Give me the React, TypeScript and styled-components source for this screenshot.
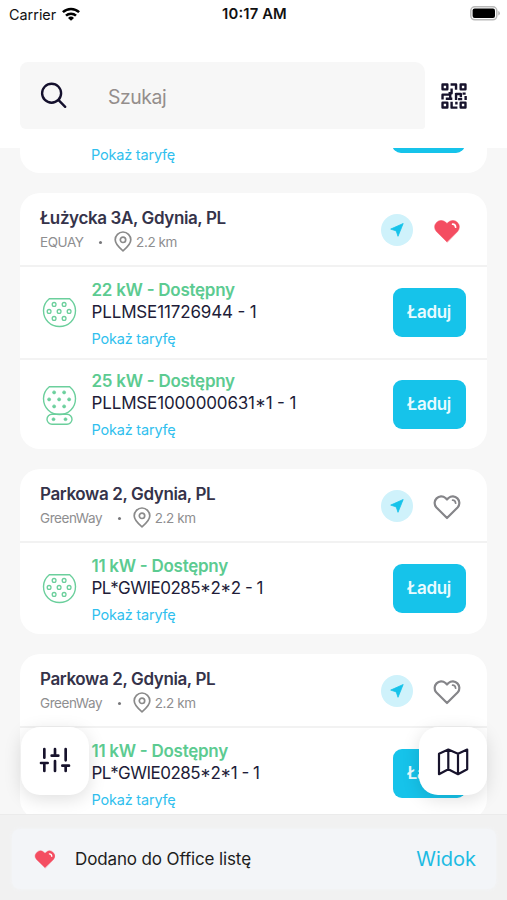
import React from 'react';
import styled, { createGlobalStyle } from 'styled-components';

const GlobalStyle = createGlobalStyle`
  * { box-sizing: border-box; }
  body {
    margin: 0;
    background: #fff;
    font-family: Inter, sans-serif;
    font-feature-settings: 'calt' 1;
  }
`;

const CYAN = '#16c3ea';
const INK = '#211c38';

const Screen = styled.div`
  width: 507px;
  height: 900px;
  display: flex;
  flex-direction: column;
  overflow: hidden;
  background: #fff;
`;

const StatusBar = styled.div`
  height: 28px;
  flex: none;
  display: grid;
  grid-template-columns: 1fr auto 1fr;
  padding: 0 7px 0 9px;
  align-items: center;
  color: #111;
`;
const Carrier = styled.div`
  display: flex;
  align-items: center;
  gap: 6px;
  font-size: 14.4px;
`;
const Clock = styled.div`
  font-size: 14.8px;
  font-weight: 600;
  letter-spacing: 0.15px;
`;
const Battery = styled.svg`
  justify-self: end;
  display: block;
  margin-top: -2px;
`;

const SearchArea = styled.div`
  height: 120px;
  flex: none;
  display: flex;
  align-items: flex-start;
  padding: 34px 0 0 20px;
`;
const SearchBox = styled.div`
  width: 405px;
  height: 67px;
  display: flex;
  align-items: center;
  gap: 39px;
  padding: 2px 0 0 20px;
  border-radius: 8px 10px 3px 6px;
  background: #f7f7f7;
  color: #948e8c;
  font-size: 19.4px;
  letter-spacing: -0.45px;
`;
const ScanButton = styled.div`
  width: 57px;
  height: 67px;
  display: flex;
  align-items: center;
  justify-content: center;
`;

const ListArea = styled.div`
  position: relative;
  height: 666px;
  flex: none;
  overflow: hidden;
  background: #f7f7f7;
`;
const List = styled.div`
  display: flex;
  flex-direction: column;
  gap: 20px;
  width: 467px;
  margin: 0 20px;
`;
const Card = styled.section`
  overflow: hidden;
  border-radius: 20px;
  background: #fff;
`;
const CutCard = styled.section`
  height: 25px;
  display: flex;
  justify-content: space-between;
  padding: 0 22px 0 71px;
  border-radius: 0 0 20px 20px;
  background: #fff;
`;
const CutButton = styled.div`
  width: 73px;
  height: 4.500px;
  overflow: hidden;
  display: flex;
  align-items: flex-end;

  &::after {
    content: '';
    flex: 1;
    height: 49px;
    border-radius: 9px;
    background: ${CYAN};
  }
`;
const CardHeader = styled.header`
  height: 74px;
  display: flex;
  padding: 13px 24px 0 20px;
  border-bottom: 2px solid #f2f2f2;
`;
const Place = styled.div`
  flex: 1;
`;
const Title = styled.div`
  margin-top: 0.6px;
  font-size: 17px;
  line-height: 22px;
  font-weight: 600;
  letter-spacing: -0.38px;
  color: #35334a;
  white-space: nowrap;
`;
const Meta = styled.div`
  display: flex;
  align-items: center;
  height: 20px;
  margin-top: 3px;
  font-size: 13.5px;
  letter-spacing: -0.42px;
  color: #8e8e90;
`;
const Dot = styled.i`
  width: 3px;
  height: 3px;
  margin: 2px 12px 0 15.5px;
  border-radius: 50%;
  background: #77777a;
`;
const Distance = styled.span`
  display: flex;
  align-items: center;
  gap: 4px;
`;
const Actions = styled.div`
  display: flex;
  align-items: center;
  gap: 18px;
  height: 47px;
`;
const RoundButton = styled.div`
  width: 32px;
  height: 32px;
  border-radius: 50%;
  background: #cff2fb;
  display: flex;
  align-items: center;
  justify-content: center;
`;
const HeartSlot = styled.div`
  width: 32px;
  display: flex;
  justify-content: center;
  padding-top: 2px;
`;

const Row = styled.div`
  height: 91px;
  display: flex;
  padding: 0 21.500px 0 22px;

  & + & {
    border-top: 2px solid #f3f3f3;
  }
`;
const PlugSlot = styled.div`
  width: 49.500px;
  height: 90px;
  display: flex;
  align-items: center;
`;
const Info = styled.div<{ $divided?: boolean }>`
  flex: 1;
  padding-top: ${(p) => (p.$divided ? 10 : 11.6)}px;
  font-size: 17px;
  line-height: 22px;
  white-space: nowrap;
`;
const Power = styled.div`
  font-weight: 600;
  letter-spacing: -0.27px;
  color: #5ccb91;
`;
const Code = styled.div<{ $tight?: boolean }>`
  letter-spacing: ${(p) => (p.$tight ? -0.52 : -0.15)}px;
  color: ${INK};
`;
const Tariff = styled.div<{ $cut?: boolean }>`
  margin-top: ${(p) => (p.$cut ? -3 : 6)}px;
  font-size: 14.5px;
  line-height: 20px;
  letter-spacing: -0.2px;
  color: #31bfee;
`;
const ChargeButton = styled.div<{ $divided?: boolean }>`
  width: 73px;
  height: 49px;
  margin-top: ${(p) => (p.$divided ? 19.5 : 21)}px;
  border-radius: 9px;
  background: ${CYAN};
  color: #e9fbff;
  font-size: 17px;
  font-weight: 600;
  letter-spacing: -0.3px;
  line-height: 49px;
  text-align: center;
`;

const Fab = styled.div<{ $side: 'left' | 'right' }>`
  position: absolute;
  top: 579px;
  ${(p) => (p.$side === 'left' ? 'left: 21px' : 'right: 20px')};
  width: 68px;
  height: 68px;
  border-radius: 19px;
  background: #fff;
  box-shadow: 0 4px 18px rgba(0, 0, 0, 0.13);
  display: flex;
  align-items: center;
  justify-content: center;
`;

const Footer = styled.footer`
  flex: 1;
  padding: 15px 11px 11px 12px;
  background: #f1f1f1;
  box-shadow: inset 0 1px 0 #ebebeb;
`;
const Toast = styled.div`
  height: 60px;
  display: flex;
  align-items: center;
  padding: 0 20px 0 22px;
  border-radius: 8px;
  background: #f3f5f8;
  box-shadow: 0 0 4px #f3f5f8;
`;
const ToastText = styled.div`
  flex: 1;
  margin-left: 19px;
  font-size: 17px;
  letter-spacing: -0.13px;
  color: #1d1d20;
`;
const ToastAction = styled.div`
  font-size: 20px;
  color: #1dbbe3;
`;

const WifiIcon = () => (
  <svg width="18" height="14" viewBox="0 0 18 14" fill="none" stroke="#000" strokeWidth="2.5">
    <path d="M.9 5.2a11.6 11.6 0 0 1 16.2 0" />
    <path d="M4 8.7a7.2 7.2 0 0 1 10 0" />
    <path d="M9 13.8 6 10.9a4.3 4.3 0 0 1 6 0Z" fill="#000" stroke="none" />
  </svg>
);

const SearchIcon = () => (
  <svg width="29" height="29" viewBox="0 0 29 29" fill="none" stroke="#14102d" strokeWidth="2.4" strokeLinecap="round">
    <circle cx="11.6" cy="11.2" r="9.5" />
    <path d="m18.6 18.2 6.600 6.600" />
  </svg>
);

const QrIcon = () => (
  <svg width="26" height="26" viewBox="0 0 76 76" fill="none" stroke="#17132c" strokeWidth="7" strokeLinejoin="round">
    <rect x="4.500" y="4.500" width="14" height="14" />
    <rect x="57.500" y="4.500" width="14" height="14" />
    <rect x="4.500" y="57.500" width="14" height="14" />
    <rect x="57.500" y="57.500" width="14" height="14" />
    <path d="M28 4.500H44V20M31 16V30H22M4.500 48V34H27V43M14 46H33M44 50V32H58V42M44 29V36M63 31H72M72 38V50M50 47H62M31 55V72H48M45 55V63" />
  </svg>
);

const PinIcon = () => (
  <svg width="18" height="21" viewBox="0 0 18 21" fill="none" stroke="#8a8a8a" strokeWidth="1.7" strokeLinejoin="round">
    <path d="M16.800 8.800C16.800 13.500 9 19.800 9 19.800S1.200 13.500 1.200 8.800a7.800 7.800 0 0 1 15.600 0Z" />
    <circle cx="9" cy="8.800" r="2.700" />
  </svg>
);

const ArrowIcon = () => (
  <svg width="14" height="14" viewBox="0 0 14 14">
    <path d="M13.200.500 8 13.300 6.200 7.900.700 6.100Z" fill={CYAN} stroke={CYAN} strokeWidth=".8" strokeLinejoin="round" />
  </svg>
);

const HEART = 'M14 24 3.200 13.300a6.600 6.600 0 0 1 9.300-9.300L14 5.500l1.500-1.500a6.600 6.600 0 0 1 9.300 9.300Z';
const HeartIcon = ({ filled, size = 28 }: { filled?: boolean; size?: number }) => (
  <svg width={size} height={(size * 26) / 28} viewBox="0 0 28 26" fill="none" strokeLinejoin="round" strokeLinecap="round">
    <path d={HEART} fill={filled ? '#f44d61' : 'none'} stroke={filled ? '#f44d61' : '#858589'} strokeWidth={filled ? 0.5 : 2.2} />
    <path d="M19.600 6.200q2.800 0 3 3" stroke={filled ? '#fff' : '#858589'} strokeWidth="1.700" />
  </svg>
);

const PINS = [[12.1, 7.4], [22.1, 7.4], [7.1, 14.4], [17.1, 14.4], [27.1, 14.4], [12.1, 21.4], [22.1, 21.4]];
const PlugIcon = ({ combo }: { combo?: boolean }) => (
  <svg width="35" height={combo ? 41 : 31} viewBox={combo ? '0 0 35 41' : '0 0 35 31'} fill="none" stroke="#6bcf9c" strokeWidth="1.400">
    <path d="M7.300 1.800H27.700C31.500 5 33.500 9 33.500 13.500C33.500 22.800 26.500 29.500 17.500 29.500S1.500 22.800 1.500 13.500C1.500 9 3.500 5 7.300 1.800Z" />
    {PINS.map(([x, y]) => (
      <circle key={`${x}-${y}`} cx={x} cy={y} r={combo ? 1.5 : 1.9} fill={combo ? '#6bcf9c' : 'none'} strokeWidth={combo ? 0.8 : 1.3} />
    ))}
    {combo && (
      <>
        <rect x="5" y="29.200" width="25" height="10" rx="5" />
        <circle cx="11.500" cy="34.200" r="1.500" fill="#6bcf9c" strokeWidth=".6" />
        <circle cx="23.500" cy="34.200" r="1.500" fill="#6bcf9c" strokeWidth=".6" />
      </>
    )}
  </svg>
);

const FilterIcon = () => (
  <svg width="32" height="32" viewBox="0 0 24 24" fill="none" stroke="#17132c" strokeWidth="2" strokeLinecap="round">
    <path d="M4 19.500V13.800M4 9.500V3M12 19.500V12M12 7.500V3M20 19.500V16M20 11.500V3M1.500 13.500h5M9.500 8h5M17.500 15.500h5" />
  </svg>
);

const MapIcon = () => (
  <svg width="32" height="29" viewBox="0 0 32 29" fill="none" stroke="#17132c" strokeWidth="2.200" strokeLinejoin="round">
    <path d="M2 6.800V27.200L11.300 22.300 21 27.200 30.200 22.300V2.600L21 6.800 11.300 2.600ZM11.300 2.600V22.300M21 6.800V27.200" />
  </svg>
);

type Connector = { power: string; code: string; tight?: boolean; combo?: boolean };
type Station = { title: string; operator: string; favourite?: boolean; connectors: Connector[] };

const stations: Station[] = [
  {
    title: 'Łużycka 3A, Gdynia, PL',
    operator: 'EQUAY',
    favourite: true,
    connectors: [
      { power: '22 kW - Dostępny', code: 'PLLMSE11726944 - 1' },
      { power: '25 kW - Dostępny', code: 'PLLMSE1000000631*1 - 1', combo: true },
    ],
  },
  {
    title: 'Parkowa 2, Gdynia, PL',
    operator: 'GreenWay',
    connectors: [{ power: '11 kW - Dostępny', code: 'PL*GWIE0285*2*2 - 1', tight: true }],
  },
  {
    title: 'Parkowa 2, Gdynia, PL',
    operator: 'GreenWay',
    connectors: [{ power: '11 kW - Dostępny', code: 'PL*GWIE0285*2*1 - 1', tight: true }],
  },
];

const ConnectorRow = ({ power, code, tight, combo, divided }: Connector & { divided?: boolean }) => (
  <Row>
    <PlugSlot>
      <PlugIcon combo={combo} />
    </PlugSlot>
    <Info $divided={divided}>
      <Power>{power}</Power>
      <Code $tight={tight}>{code}</Code>
      <Tariff>Pokaż taryfę</Tariff>
    </Info>
    <ChargeButton $divided={divided}>Ładuj</ChargeButton>
  </Row>
);

export default function App() {
  return (
    <Screen>
      <GlobalStyle />
      <StatusBar>
        <Carrier>
          Carrier
          <WifiIcon />
        </Carrier>
        <Clock>10:17 AM</Clock>
        <Battery width="30" height="15" viewBox="0 0 30 15">
          <rect x=".8" y=".8" width="26" height="13" rx="4" fill="#fff" stroke="#b9b9b9" strokeWidth="1.500" />
          <rect x="2.600" y="2.600" width="22.400" height="9.400" rx="2" fill="#000" />
          <path d="M28.300 5v4.600q1.500-.6 1.500-2.300t-1.500-2.300" fill="#b0b0b0" />
        </Battery>
      </StatusBar>
      <SearchArea>
        <SearchBox>
          <SearchIcon />
          Szukaj
        </SearchBox>
        <ScanButton>
          <QrIcon />
        </ScanButton>
      </SearchArea>
      <ListArea>
        <List>
          <CutCard>
            <Tariff $cut>Pokaż taryfę</Tariff>
            <CutButton />
          </CutCard>
          {stations.map((s, i) => (
            <Card key={i}>
              <CardHeader>
                <Place>
                  <Title>{s.title}</Title>
                  <Meta>
                    {s.operator}
                    <Dot />
                    <Distance>
                      <PinIcon />
                      2.2 km
                    </Distance>
                  </Meta>
                </Place>
                <Actions>
                  <RoundButton>
                    <ArrowIcon />
                  </RoundButton>
                  <HeartSlot>
                    <HeartIcon filled={s.favourite} />
                  </HeartSlot>
                </Actions>
              </CardHeader>
              {s.connectors.map((c, j) => (
                <ConnectorRow key={c.code} {...c} divided={j > 0} />
              ))}
            </Card>
          ))}
        </List>
        <Fab $side="left">
          <FilterIcon />
        </Fab>
        <Fab $side="right">
          <MapIcon />
        </Fab>
      </ListArea>
      <Footer>
        <Toast>
          <HeartIcon filled size={22} />
          <ToastText>Dodano do Office listę</ToastText>
          <ToastAction>Widok</ToastAction>
        </Toast>
      </Footer>
    </Screen>
  );
}
